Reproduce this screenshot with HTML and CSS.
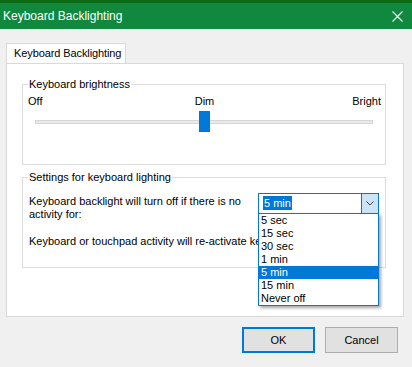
FILE: index.html
```html
<!DOCTYPE html>
<html lang="en">
<head>
  <meta charset="UTF-8">
  <meta name="viewport" content="width=device-width, initial-scale=1.0">
  <title>Keyboard Backlighting</title>
  <link rel="stylesheet" href="styles.css">
</head>
<body>
  <div class="titlebar">
    <span class="title">Keyboard Backlighting</span>
    <svg class="close" width="11" height="11" viewBox="0 0 11 11">
      <path d="M0.5 0.5 L10.5 10.5 M10.5 0.5 L0.5 10.5" stroke="#fff" stroke-width="1.1" fill="none"/>
    </svg>
  </div>

  <div class="dialog">
    <div class="tabs">
      <div class="tab active">Keyboard Backlighting</div>
    </div>

    <div class="tab-panel">
      <!-- Brightness slider -->
      <div class="group brightness">
        <span class="group-title">Keyboard brightness</span>
        <div class="scale">
          <span>Off</span>
          <span>Dim</span>
          <span class="scale-end">Bright</span>
        </div>
        <div class="slider">
          <div class="track"></div>
          <div class="thumb"></div>
        </div>
      </div>

      <!-- Timeout settings -->
      <div class="group lighting">
        <span class="group-title">Settings for keyboard lighting</span>
        <div class="timeout-row">
          <p class="timeout-label">Keyboard backlight will turn off if there is no activity for:</p>
          <div class="combo">
            <div class="combo-value"><span class="combo-selected">5 min</span></div>
            <div class="combo-button">
              <svg width="8" height="5" viewBox="0 0 8 5">
                <path d="M0.5 0.5 L4 4 L7.5 0.5" stroke="#444" stroke-width="1" fill="none"/>
              </svg>
            </div>
            <ul class="combo-list">
              <li>5 sec</li>
              <li>15 sec</li>
              <li>30 sec</li>
              <li>1 min</li>
              <li class="selected">5 min</li>
              <li>15 min</li>
              <li>Never off</li>
            </ul>
          </div>
        </div>
        <p class="note">Keyboard or touchpad activity will re-activate keyboard backlight.</p>
      </div>
    </div>

    <div class="buttons">
      <button class="btn default">OK</button>
      <button class="btn">Cancel</button>
    </div>
  </div>
</body>
</html>
```

FILE: styles.css
```css
/* Page and window frame */
body {
  margin: 0;
  width: 412px;
  height: 367px;
  background-color: #f0f0f0;
  font-family: "Liberation Sans", Arial, sans-serif;
  font-size: 11px;
  color: #000;
  overflow: hidden;
}

.titlebar {
  height: 26px;
  border-top: 3px solid #0b6b14;
  background-color: #10893e;
  display: flex;
  align-items: center;
  justify-content: space-between;
  padding: 0 9px 0 3px;
}

.title {
  color: #fff;
  font-size: 12px;
}

.close {
  display: block;
}

.dialog {
  padding: 14px 8px 0 6px;
}

/* Tabs */
.tabs {
  display: flex;
}

.tab {
  width: 120px;
  height: 20px;
  box-sizing: border-box;
  padding-left: 7px;
  line-height: 19px;
  white-space: nowrap;
  letter-spacing: -0.1px;
  border: 1px solid #d9d9d9;
  border-bottom: none;
  background-color: #fff;
}

.tab-panel {
  height: 254px;
  box-sizing: border-box;
  border: 1px solid #d9d9d9;
  background-color: #fff;
  padding: 20px 17px 0 15px;
}

/* Group boxes */
.group {
  position: relative;
  border: 1px solid #dcdcdc;
  box-sizing: border-box;
}

.group-title {
  position: absolute;
  top: -9px;
  left: 5px;
  padding: 0 1px;
  background-color: #fff;
  line-height: 16px;
  white-space: nowrap;
}

.brightness {
  height: 81px;
  padding: 8px 12px 0 12px;
}

.scale {
  display: grid;
  grid-template-columns: 1fr auto 1fr;
  line-height: 16px;
  margin: 0 -8px 0 -7px;
}

.scale-end {
  justify-self: end;
}

.slider {
  position: relative;
  height: 21px;
  margin-top: 2px;
  display: flex;
  align-items: center;
}

.track {
  flex: 1;
  height: 2px;
  border: 1px solid #d6d6d6;
  background-color: #e7eaea;
}

.thumb {
  position: absolute;
  top: 0;
  left: calc(50% - 5px);
  width: 11px;
  height: 21px;
  background-color: #0078d7;
}

.lighting {
  height: 91px;
  margin-top: 12px;
  padding: 17px 0 0 6px;
}

.timeout-row {
  display: flex;
  align-items: flex-start;
}

.timeout-label {
  margin: 0;
  width: 229px;
  padding-right: 8px;
  box-sizing: border-box;
  line-height: 13px;
}

/* the open list hides the rest of this line */
.note {
  margin: 14px 0 0 0;
  width: 229px;
  line-height: 13px;
  white-space: nowrap;
  overflow: hidden;
}

/* Combo box with its open list */
.combo {
  position: relative;
  width: 121px;
  height: 21px;
  box-sizing: border-box;
  margin-top: -2px;
  border: 1px solid #0078d7;
  display: flex;
}

.combo-value {
  flex: 1;
  padding: 2px 0 0 4px;
}

.combo-selected {
  display: inline-block;
  height: 14px;
  line-height: 14px;
  padding: 0 1px;
  background-color: #0078d7;
  color: #fff;
}

.combo-button {
  width: 16px;
  border-left: 1px solid #0078d7;
  background-color: #cce4f7;
  display: flex;
  align-items: center;
  justify-content: center;
}

.combo-list {
  position: absolute;
  top: 100%;
  left: -1px;
  width: 121px;
  box-sizing: border-box;
  margin: 0;
  padding: 0;
  list-style: none;
  border: 1px solid #0078d7;
  background-color: #fff;
  box-shadow: 2px 2px 3px rgba(0, 0, 0, 0.35);
  z-index: 2;
}

.combo-list li {
  height: 13px;
  line-height: 13px;
  padding-left: 2px;
}

.combo-list li.selected {
  background-color: #0078d7;
  color: #fff;
}

/* Dialog buttons */
.buttons {
  display: flex;
  justify-content: flex-end;
  gap: 10px;
  margin: 10px 6px 0 0;
}

.btn {
  width: 73px;
  height: 26px;
  font-family: inherit;
  font-size: 11px;
  color: #000;
  background-color: #e1e1e1;
  border: 1px solid #adadad;
  padding: 0;
}

.btn.default {
  border: 2px solid #0078d7;
}
```
